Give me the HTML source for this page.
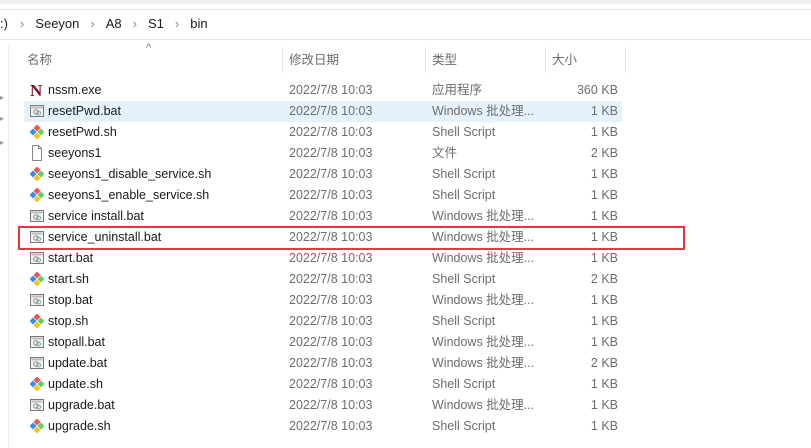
<!DOCTYPE html>
<html><head><meta charset="utf-8"><style>
*{margin:0;padding:0;box-sizing:border-box}
body{width:811px;height:448px;background:#fff;position:relative;overflow:hidden;font-family:"Liberation Sans","Noto Sans CJK SC",sans-serif;font-size:12.5px;color:#1a1a1a}
.a{position:absolute}
.t{position:absolute;white-space:nowrap;line-height:21px}
.g{color:#6d6d6d}
.sep{position:absolute;top:47px;height:26px;width:1px;background:#e5e5e5}
.ic{position:absolute;left:30px;width:14px;height:14px}
</style></head><body>
<div class="a" style="left:0;top:0;width:811px;height:4px;background:#f0f0f0"></div>
<div class="a" style="left:0;top:9px;width:811px;height:1px;background:#e3e3e3"></div>
<div class="a" style="left:0;top:39px;width:811px;height:1px;background:#e3e3e3"></div>
<div class="t" style="left:0;top:13px;font-size:13px">:)<span style="color:#888;margin:0 11px 0 12px">›</span>Seeyon<span style="color:#888;margin:0 11px">›</span>A8<span style="color:#888;margin:0 11px">›</span>S1<span style="color:#888;margin:0 11px">›</span>bin</div>
<div class="a" style="left:8px;top:45px;width:1px;height:403px;background:#ececec"></div>
<div class="t" style="left:146px;top:38px;font-size:11px;color:#777">^</div>
<div class="t g" style="left:27px;top:50px">名称</div>
<div class="sep" style="left:282px"></div>
<div class="t g" style="left:289px;top:50px">修改日期</div>
<div class="sep" style="left:425px"></div>
<div class="t g" style="left:432px;top:50px">类型</div>
<div class="sep" style="left:545px"></div>
<div class="t g" style="left:552px;top:50px">大小</div>
<div class="sep" style="left:625px"></div>
<div class="a" style="left:24px;top:101px;width:598px;height:21px;background:#e5f1fb"></div>
<div class="a" style="left:18px;top:226px;width:667px;height:24px;border:2px solid #e8383d"></div>
<div id="rows"></div>
<script>
var R=[["nssm.exe","应用程序","360 KB","n"],["resetPwd.bat","Windows 批处理...","1 KB","b"],["resetPwd.sh","Shell Script","1 KB","s"],["seeyons1","文件","2 KB","f"],["seeyons1_disable_service.sh","Shell Script","1 KB","s"],["seeyons1_enable_service.sh","Shell Script","1 KB","s"],["service install.bat","Windows 批处理...","1 KB","b"],["service_uninstall.bat","Windows 批处理...","1 KB","b"],["start.bat","Windows 批处理...","1 KB","b"],["start.sh","Shell Script","2 KB","s"],["stop.bat","Windows 批处理...","1 KB","b"],["stop.sh","Shell Script","1 KB","s"],["stopall.bat","Windows 批处理...","1 KB","b"],["update.bat","Windows 批处理...","2 KB","b"],["update.sh","Shell Script","1 KB","s"],["upgrade.bat","Windows 批处理...","1 KB","b"],["upgrade.sh","Shell Script","1 KB","s"]];
var h="";
R.forEach(function(r,i){var y=80+i*21;var ic="";
if(r[3]=="n")ic='<div class="t" style="left:30px;top:'+y+'px;font-family:Liberation Serif,serif;font-weight:bold;font-size:17px;color:#7a1020">N</div>';
else if(r[3]=="b")ic='<svg class="ic" style="top:'+(y+3)+'px" viewBox="0 0 14 14"><rect x="0.5" y="1.5" width="13" height="11" fill="#f4f4f4" stroke="#777"/><rect x="1.5" y="2.5" width="11" height="2" fill="#bbb"/><circle cx="6" cy="8" r="2.3" fill="none" stroke="#888"/><circle cx="8.5" cy="9" r="2" fill="none" stroke="#7aa"/></svg>';
else if(r[3]=="s")ic='<svg class="ic" style="top:'+(y+3)+'px" viewBox="0 0 14 14"><rect x="4.5" y="0.5" width="5" height="5" transform="rotate(45 7 3)" fill="#e55"/><rect x="0.5" y="4.5" width="5" height="5" transform="rotate(45 3 7)" fill="#3a8ee6"/><rect x="8.5" y="4.5" width="5" height="5" transform="rotate(45 11 7)" fill="#6c6"/><rect x="4.5" y="8.5" width="5" height="5" transform="rotate(45 7 11)" fill="#f5c518"/></svg>';
else ic='<svg class="ic" style="top:'+(y+2)+'px;height:16px" viewBox="0 0 14 16"><path d="M2.5 .5h6l3 3v12h-9z" fill="#fff" stroke="#888"/><path d="M8.5 .5v3h3" fill="none" stroke="#888"/></svg>';
h+=ic+'<div class="t" style="left:48px;top:'+y+'px">'+r[0]+'</div><div class="t g" style="left:289px;top:'+y+'px">2022/7/8 10:03</div><div class="t g" style="left:432px;top:'+y+'px">'+r[1]+'</div><div class="t g" style="left:545px;width:73px;text-align:right;top:'+y+'px">'+r[2]+'</div>';});
document.getElementById("rows").innerHTML=h;
</script>
<div class="a" style="left:0;top:93px;color:#999;font-size:8px">▸</div>
<div class="a" style="left:0;top:114px;color:#999;font-size:8px">▸</div>
<div class="a" style="left:0;top:138px;color:#999;font-size:8px">▸</div>
</body></html>
